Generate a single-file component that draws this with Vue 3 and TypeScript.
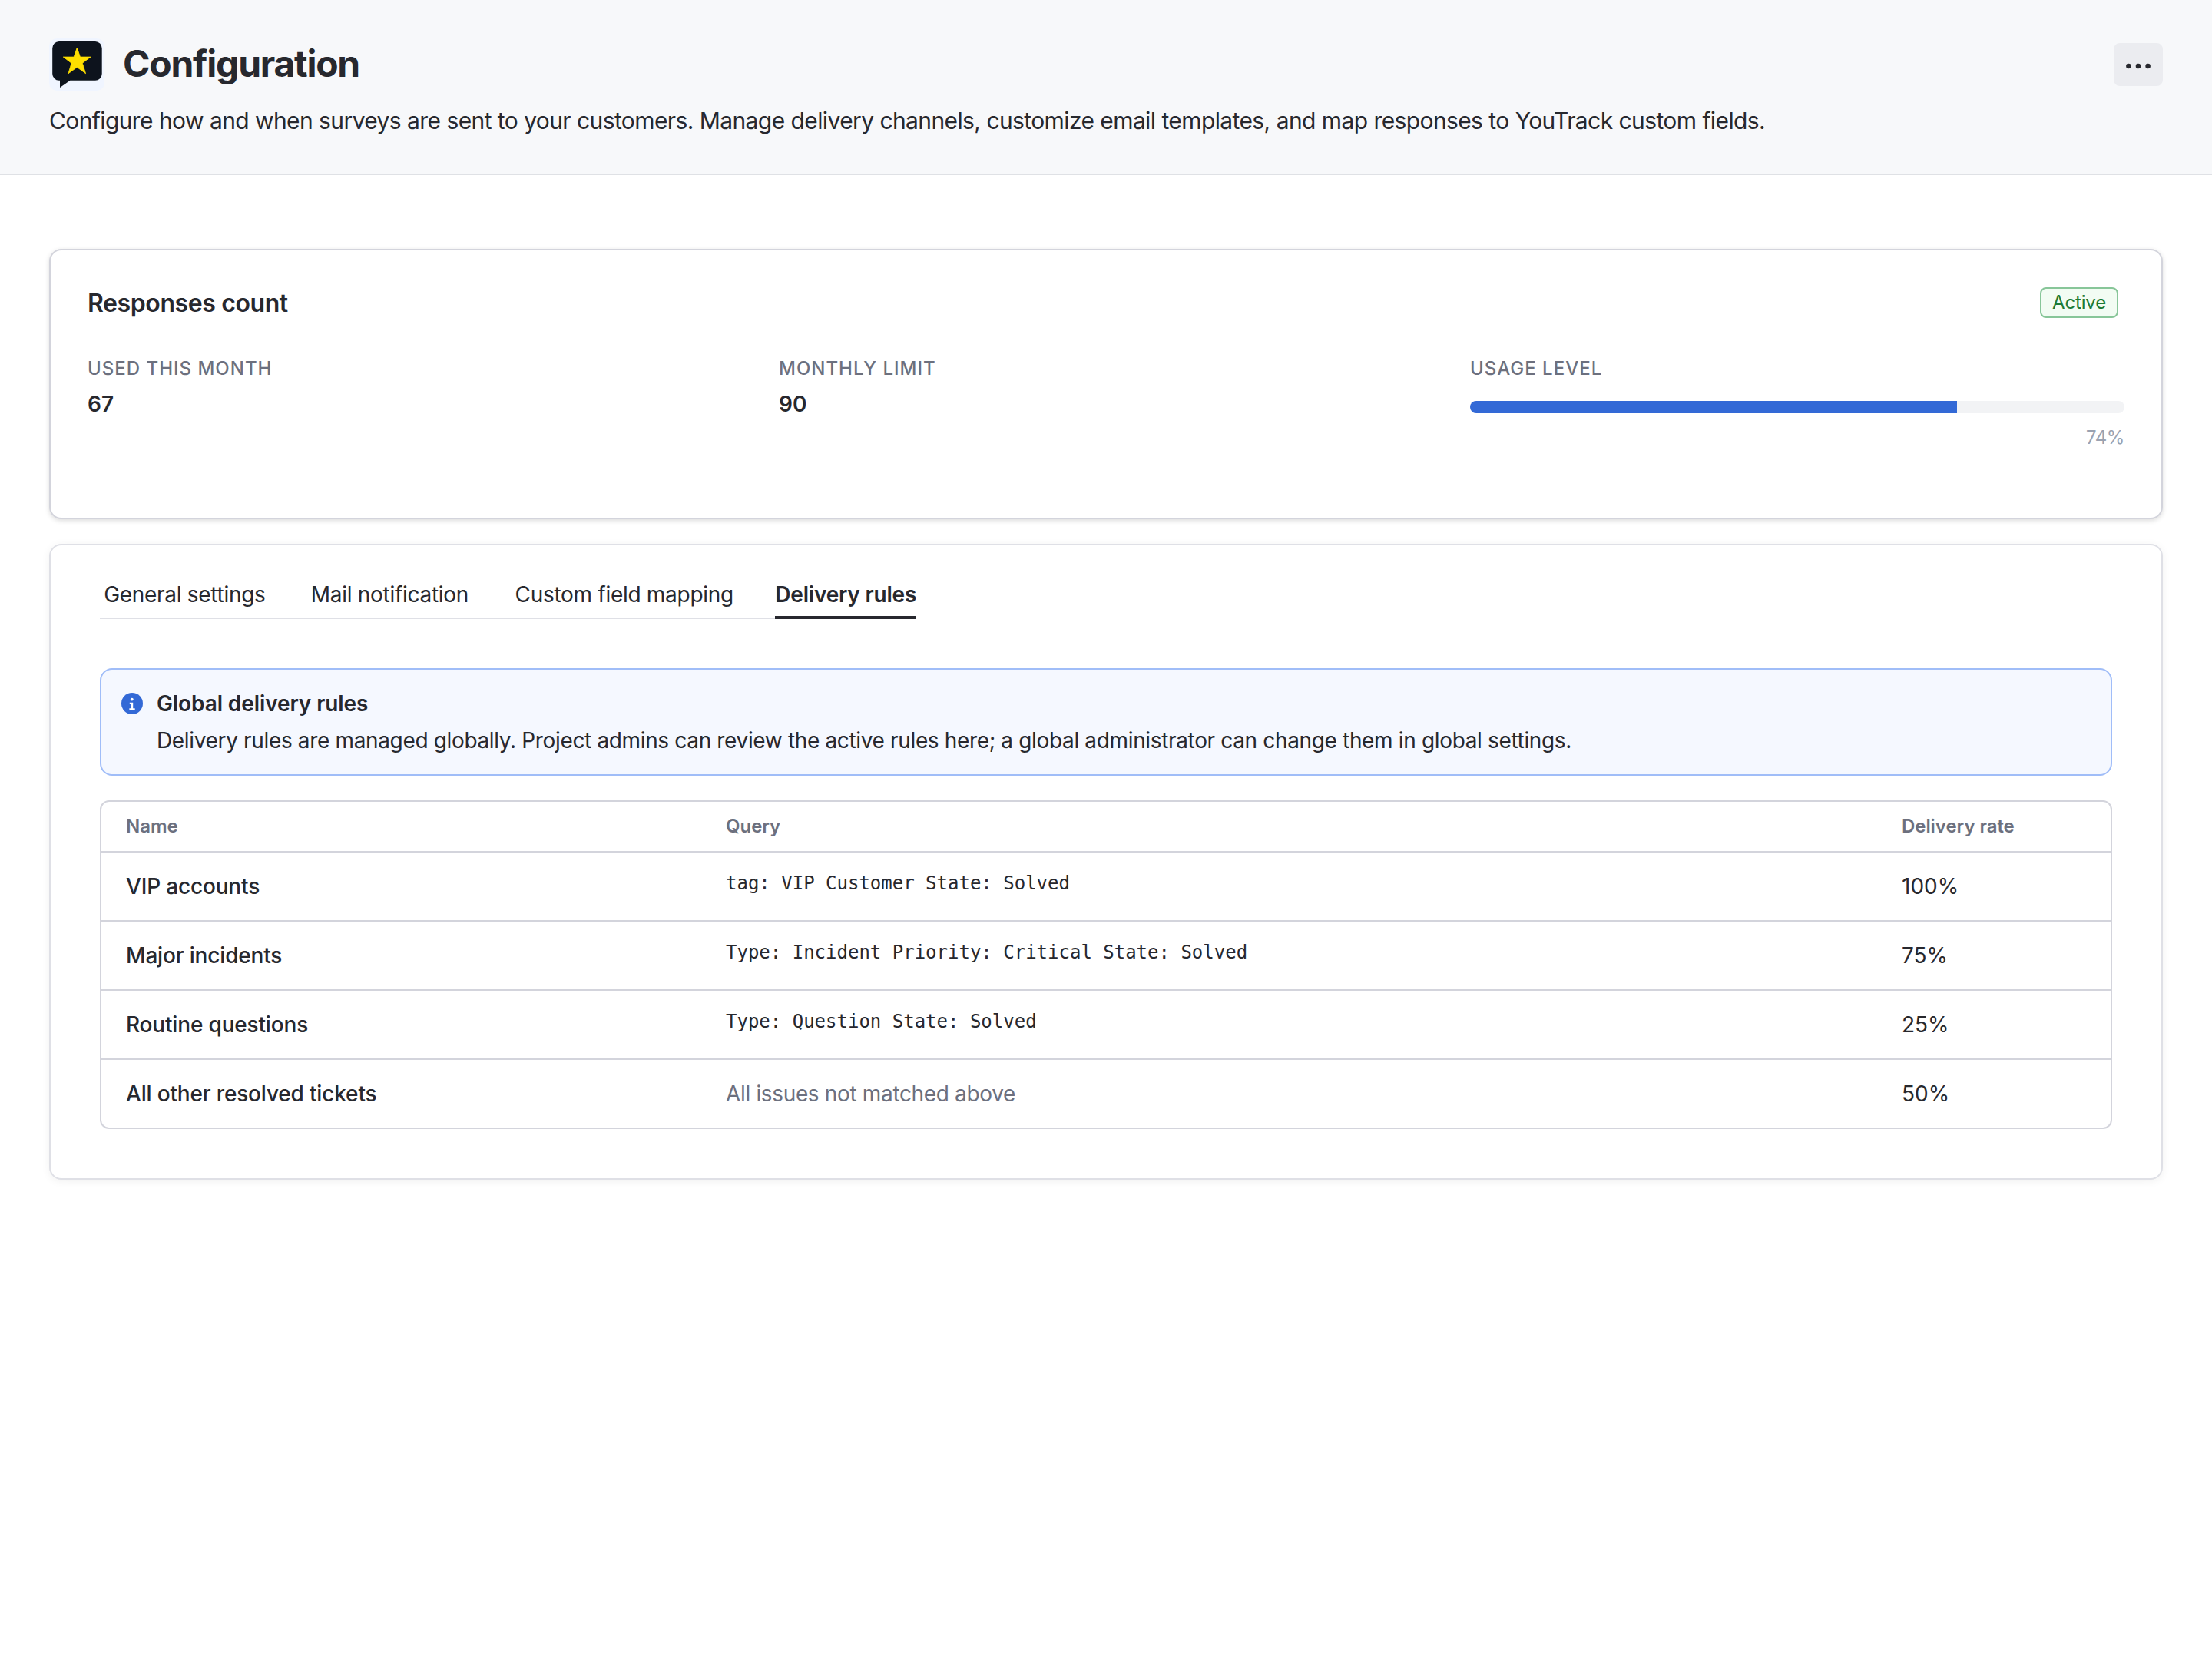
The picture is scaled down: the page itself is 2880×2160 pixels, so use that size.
<script setup lang="ts">
interface Tab { label: string; active?: boolean }
interface Rule { name: string; query: string; fallback?: boolean; rate: string }

const tabs: Tab[] = [
  { label: 'General settings' },
  { label: 'Mail notification' },
  { label: 'Custom field mapping' },
  { label: 'Delivery rules', active: true },
]

const rules: Rule[] = [
  { name: 'VIP accounts', query: 'tag: VIP Customer State: Solved', rate: '100%' },
  { name: 'Major incidents', query: 'Type: Incident Priority: Critical State: Solved', rate: '75%' },
  { name: 'Routine questions', query: 'Type: Question State: Solved', rate: '25%' },
  { name: 'All other resolved tickets', query: 'All issues not matched above', fallback: true, rate: '50%' },
]

const used = 67
const limit = 90
const usage = (used / limit) * 100
</script>

<template>
  <div class="page">
    <header class="header">
      <div class="header-row">
        <svg class="logo" viewBox="0 0 72 68" aria-hidden="true">
          <rect width="72" height="68" rx="10" fill="#f0f5ff" />
          <path d="M13 4H60a8.7 8.7 0 0 1 8.7 8.7V46a8.7 8.7 0 0 1-8.7 8.7H27.3L14 64V54.7H13A8.700 8.700 0 0 1 4.200 46V12.700A8.700 8.700 0 0 1 13 4Z" fill="#0d131d" />
          <path d="M36.300 12 40.400 24.100 54 24.100 43.300 32.200 47.600 45.700 36.300 37.500 25 45.700 29 32.200 18.300 24.100 32.200 24.100Z" fill="#ffdf00" stroke="#ffdf00" stroke-width="0.800" stroke-linejoin="round" />
        </svg>
        <h1 class="title">Configuration</h1>
        <button class="more" type="button" aria-label="More">
          <svg viewBox="0 0 32 8"><circle cx="3.400" cy="4" r="3.300" /><circle cx="16" cy="4" r="3.300" /><circle cx="28.600" cy="4" r="3.300" /></svg>
        </button>
      </div>
      <p class="description">Configure how and when surveys are sent to your customers. Manage delivery channels, customize email templates, and map responses to YouTrack custom fields.</p>
    </header>

    <main class="main">
      <section class="card usage">
        <div class="usage-head">
          <h2 class="usage-title">Responses count</h2>
          <span class="badge">Active</span>
        </div>
        <div class="stats">
          <div class="stat">
            <span class="label">USED THIS MONTH</span>
            <span class="value">{{ used }}</span>
          </div>
          <div class="stat">
            <span class="label">MONTHLY LIMIT</span>
            <span class="value">{{ limit }}</span>
          </div>
          <div class="stat">
            <span class="label">USAGE LEVEL</span>
            <div class="track"><div class="fill" :style="{ width: usage + '%' }"></div></div>
            <span class="percent">{{ Math.floor(usage) }}%</span>
          </div>
        </div>
      </section>

      <section class="card settings">
        <nav class="tabs">
          <a v-for="tab in tabs" :key="tab.label" class="tab" :class="{ active: tab.active }" :data-label="tab.label"><span>{{ tab.label }}</span></a>
        </nav>

        <div class="notice">
          <svg class="info" viewBox="0 0 28 28" aria-hidden="true">
            <circle cx="14" cy="14" r="14" fill="#3369d6" />
            <circle cx="13.800" cy="8.600" r="1.900" fill="#fff" />
            <path d="M10.800 12.800H15.200V20.300H17.700V22.300H10.400V20.300H12.800V14.800H10.800Z" fill="#fff" />
          </svg>
          <div>
            <p class="notice-title">Global delivery rules</p>
            <p class="notice-text">Delivery rules are managed globally. Project admins can review the active rules here; a global administrator can change them in global settings.</p>
          </div>
        </div>

        <div class="table">
          <div class="row head">
            <span>Name</span><span>Query</span><span>Delivery rate</span>
          </div>
          <div v-for="rule in rules" :key="rule.name" class="row">
            <span class="name">{{ rule.name }}</span>
            <span v-if="rule.fallback" class="fallback">{{ rule.query }}</span>
            <code v-else class="query">{{ rule.query }}</code>
            <span class="rate">{{ rule.rate }}</span>
          </div>
        </div>
      </section>
    </main>
  </div>
</template>

<style>
body { margin: 0; background: #fff; }
</style>

<style scoped>
.page { min-height: 2160px; box-sizing: border-box; background: #fff; color: #27282e; font-family: Inter, "Liberation Sans", sans-serif; font-size: 28px; line-height: 40px; }
h1, h2, p { margin: 0; }
.header { box-sizing: border-box; height: 228px; padding: 50px 64px 0; background: #f7f8fa; border-bottom: 2px solid #dfe1e5; }
.header-row { display: flex; align-items: flex-start; height: 68px; }
.logo { width: 72px; height: 68px; margin-right: 24px; }
.title { font-size: 48px; line-height: 65px; font-weight: 700; letter-spacing: -1.250px; }
.more { display: flex; align-items: center; justify-content: center; width: 64px; height: 56px; margin: 6px 0 0 auto; padding: 4px 0 0; border: 0; border-radius: 8px; background: #ebecf0; box-sizing: border-box; }
.more svg { width: 32px; height: 8px; fill: #27282e; }
.description { margin-top: 19px; font-size: 30px; letter-spacing: -0.610px; word-spacing: 0.200px; white-space: nowrap; }
.main { display: flex; flex-direction: column; gap: 32px; padding: 96px 64px 0; }
.card { box-sizing: border-box; border: 2px solid #d3d4dc; border-radius: 16px; background: #fff; }
.usage { height: 352px; padding: 48px; box-shadow: 0 2px 6px rgba(0, 0, 0, 0.14); }
.usage-head { display: flex; justify-content: space-between; height: 40px; margin-bottom: 50px; }
.usage-title { font-size: 32px; line-height: 41px; font-weight: 600; letter-spacing: -0.400px; }
.badge { box-sizing: border-box; width: 102px; height: 40px; margin-right: 8px; border: 2px solid #88c699; border-radius: 8px; background: #f2fcf3; color: #1b7a35; font-size: 24px; line-height: 35px; letter-spacing: -0.150px; text-align: center; }
.stats { display: grid; grid-template-columns: repeat(3, 1fr); gap: 48px; }
.stat { display: flex; flex-direction: column; }
.label { color: #6c707e; font-size: 24px; line-height: 32px; font-weight: 500; letter-spacing: 1px; }
.value { margin-top: 10px; font-weight: 600; }
.track { height: 16px; margin-top: 26px; border-radius: 8px; background: #f2f3f5; overflow: hidden; }
.fill { height: 100%; background: #3369d6; }
.percent { margin-top: 16px; color: #9aa2b1; font-size: 24px; line-height: 32px; letter-spacing: -0.400px; text-align: right; }
.settings { padding: 44px 64px 64px; border-color: #dfe0e6; box-shadow: 0 2px 12px rgba(0, 0, 0, 0.06); }
.tabs { display: flex; gap: 48px; width: max-content; height: 52px; box-shadow: inset 0 -2px #dfe0e6; }
.tab { display: grid; justify-items: center; box-sizing: border-box; height: 52px; letter-spacing: -0.290px; }
.tab > span, .tab::after { grid-area: 1 / 1; }
/* Reserves the width of the selected state, so that the tabs keep their places. */
.tab::after { content: attr(data-label); font-weight: 600; letter-spacing: 0; visibility: hidden; }
.active, .active::after { letter-spacing: -0.190px; }
.active { box-shadow: inset 0 -4px #27282e; font-weight: 600; }
.notice { display: flex; box-sizing: border-box; height: 140px; margin-top: 64px; padding: 24px 26px; gap: 18px; border: 2px solid #a0bdf8; border-radius: 16px; background: #f5f8ff; }
.info { width: 28px; height: 28px; margin-top: 6px; flex: none; }
.notice-title { font-weight: 600; letter-spacing: -0.100px; }
.notice-text { margin-top: 8px; letter-spacing: -0.347px; white-space: nowrap; }
.table { margin-top: 32px; border: 2px solid #d3d4dc; border-radius: 12px; }
.row { display: grid; grid-template-columns: 781px 1531px 1fr; align-items: center; height: 88px; padding-left: 32px; border-top: 2px solid #d3d4dc; }
.head { height: 64px; border-top: 0; color: #6c707e; font-size: 24px; font-weight: 600; line-height: 40px; letter-spacing: -0.060px; }
.name { font-weight: 500; letter-spacing: -0.170px; }
.fallback { color: #6c707e; letter-spacing: -0.345px; }
.query { padding-bottom: 9px; font-family: "DejaVu Sans Mono", monospace; font-size: 24px; }
</style>
